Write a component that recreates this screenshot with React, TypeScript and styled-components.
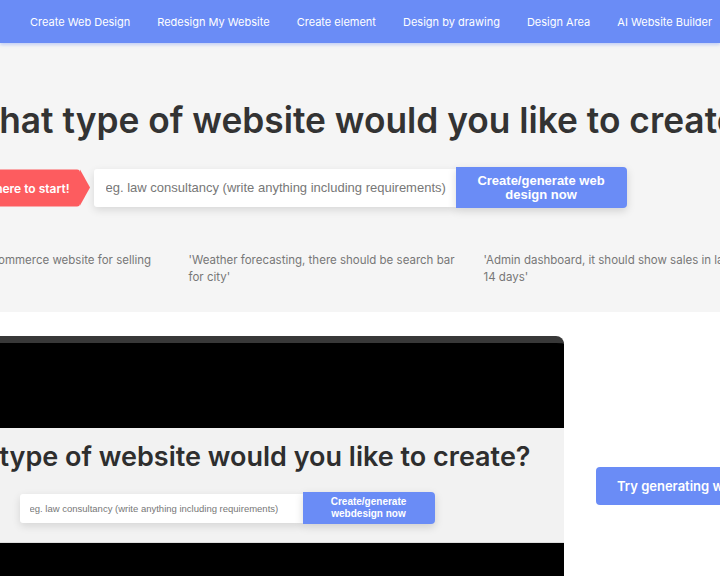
import styled, { createGlobalStyle } from 'styled-components'

const GlobalStyle = createGlobalStyle`
    html, body {
        margin: 0;
        padding: 0;
        background: #ffffff;
        overflow-x: hidden;
        font-family: Inter, "Open Sans", sans-serif;
    }
`

const colors = {
    primary: '#6a8cf6',
    text: '#333333',
    muted: '#777777',
    red: '#fd5c5f',
    band: '#f5f5f5',
}

const Nav = styled.nav`
    height: 43px;
    background: ${colors.primary};
    display: flex;
    align-items: center;
    gap: 27px;
    padding-left: 30px;
    white-space: nowrap;
    overflow: hidden;
    box-shadow: 0 2px 3px rgba(106, 140, 246, 0.35);
    position: relative;
    z-index: 1;
`

const NavLink = styled.a`
    color: #ffffff;
    font-size: 11px;
    text-decoration: none;
    flex-shrink: 0;
`

const Hero = styled.section`
    background: ${colors.band};
    height: 269px;
    box-sizing: border-box;
    padding-top: 56px;
    display: flex;
    flex-direction: column;
    align-items: center;
    overflow: hidden;
`

const Title = styled.h1`
    margin: 0;
    font-size: 35.3px;
    line-height: 43px;
    font-weight: 600;
    color: ${colors.text};
    white-space: nowrap;
    flex-shrink: 0;
`

const SearchRow = styled.div<{ $small?: boolean }>`
    position: relative;
    display: flex;
    align-items: center;
    margin-top: ${p => (p.$small ? '20px' : '25px')};
    flex-shrink: 0;
`

const StartPill = styled.div`
    position: absolute;
    right: calc(100% + 14px);
    top: 50%;
    transform: translateY(-50%);
    height: 37px;
    padding: 0 10px 0 22px;
    display: flex;
    align-items: center;
    background: ${colors.red};
    color: #ffffff;
    font-size: 12px;
    font-weight: 600;
    white-space: nowrap;
    border-radius: 18px 3px 3px 18px;
    &::after {
        content: '';
        position: absolute;
        left: 100%;
        top: 0;
        border-top: 18.5px solid transparent;
        border-bottom: 18.5px solid transparent;
        border-left: 10px solid ${colors.red};
    }
`

const PromptInput = styled.input<{ $small?: boolean }>`
    width: ${p => (p.$small ? '283px' : '362px')};
    height: ${p => (p.$small ? '29px' : '38px')};
    box-sizing: border-box;
    border: none;
    outline: none;
    background: #ffffff;
    padding-left: ${p => (p.$small ? '10px' : '12px')};
    font-family: "Liberation Sans", Arial, sans-serif;
    font-size: ${p => (p.$small ? '9.5px' : '13px')};
    border-radius: 3px 0 0 3px;
    box-shadow: 0 3px 8px rgba(0, 0, 0, 0.12);
    &::placeholder {
        color: ${colors.muted};
    }
`

const GenerateButton = styled.button<{ $small?: boolean }>`
    width: ${p => (p.$small ? '132px' : '171px')};
    height: ${p => (p.$small ? '32px' : '41px')};
    border: none;
    background: ${colors.primary};
    color: #ffffff;
    font-family: "Liberation Sans", Arial, sans-serif;
    font-weight: bold;
    font-size: ${p => (p.$small ? '10px' : '13px')};
    line-height: ${p => (p.$small ? '12px' : '14px')};
    border-radius: 0 4px 4px 0;
    box-shadow: 0 3px 8px rgba(0, 0, 0, 0.15);
    padding: 0 10px;
`

const Examples = styled.div`
    margin-top: 44px;
    display: grid;
    grid-template-columns: repeat(3, 267px);
    column-gap: 28px;
    padding-right: 76px;
    flex-shrink: 0;
`

const Example = styled.p`
    margin: 0;
    font-size: 11.5px;
    line-height: 16.5px;
    color: ${colors.muted};
`

const Showcase = styled.section`
    padding-top: 24px;
    display: flex;
    justify-content: center;
    align-items: flex-start;
    gap: 32px;
    height: 264px;
    box-sizing: border-box;
    overflow: hidden;
`

const VideoFrame = styled.div`
    width: 640px;
    height: 300px;
    flex-shrink: 0;
    background: #000000;
    border-top: 7px solid #383838;
    border-radius: 8px 8px 0 0;
    box-sizing: border-box;
    padding-top: 85px;
`

const Screen = styled.div`
    height: 115px;
    background: #f2f2f2;
    border-bottom: 1px solid #dcdcdc;
    box-sizing: border-box;
    padding: 14px 34px 0 0;
    display: flex;
    flex-direction: column;
    align-items: center;
    overflow: hidden;
`

const ScreenTitle = styled.h2`
    margin: 0;
    font-size: 27px;
    line-height: 30px;
    font-weight: 600;
    color: #2e2e2e;
    white-space: nowrap;
    flex-shrink: 0;
`

const Aside = styled.div`
    width: 200px;
    flex-shrink: 0;
    padding-top: 131px;
`

const TryButton = styled.button`
    height: 38px;
    padding: 0 21px;
    border: none;
    border-radius: 4px;
    background: ${colors.primary};
    color: #ffffff;
    font-family: Inter, "Open Sans", sans-serif;
    font-size: 13px;
    font-weight: 600;
    white-space: nowrap;
`

const navItems = [
    'Create Web Design',
    'Redesign My Website',
    'Create element',
    'Design by drawing',
    'Design Area',
    'AI Website Builder',
]

const examples = [
    "'Create a simple ecommerce website for selling shoes'",
    "'Weather forecasting, there should be search bar for city'",
    "'Admin dashboard, it should show sales in last 14\u00a0days'",
]

const placeholder = 'eg. law consultancy (write anything including requirements)'

const App = () =>
    <>
        <GlobalStyle />
        <Nav>
            {navItems.map(item => <NavLink key={item} href='#'>{item}</NavLink>)}
        </Nav>

        <Hero>
            <Title>What type of website would you like to create?</Title>
            <SearchRow>
                <StartPill>Click here to start!</StartPill>
                <PromptInput placeholder={placeholder} />
                <GenerateButton>Create/generate web design now</GenerateButton>
            </SearchRow>
            <Examples>
                {examples.map(text => <Example key={text}>{text}</Example>)}
            </Examples>
        </Hero>

        <Showcase>
            <VideoFrame>
                <Screen>
                    <ScreenTitle>What type of website would you like to create?</ScreenTitle>
                    <SearchRow $small>
                        <PromptInput $small placeholder={placeholder} />
                        <GenerateButton $small>Create/generate webdesign now</GenerateButton>
                    </SearchRow>
                </Screen>
            </VideoFrame>
            <Aside>
                <TryButton>Try generating website now</TryButton>
            </Aside>
        </Showcase>
    </>

export default App
